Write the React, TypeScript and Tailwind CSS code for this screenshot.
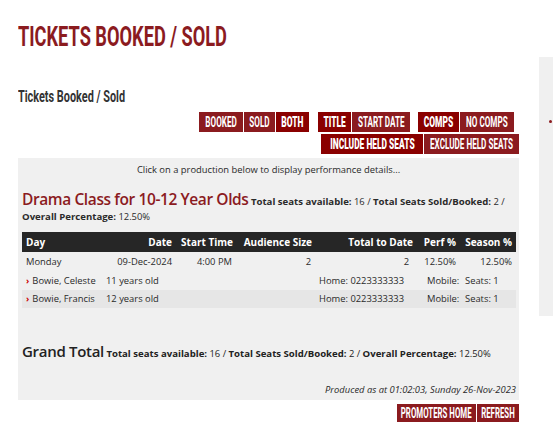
import React from "react";

const RED = "bg-[#8b1b1f]";

function Btn({ label, w, sel }: { label: string; w: string; sel?: boolean }) {
  return (
    <div
      className={`${w} h-[20px] flex items-center justify-center overflow-visible ${
        sel ? "bg-[#8a0000]" : RED
      }`}
    >
      <span
        className={`inline-block whitespace-nowrap text-white text-[14px] leading-[14px] ${
          sel ? "font-black scale-x-[0.6]" : "font-bold scale-x-[0.58]"
        }`}
        style={{ fontFamily: "Roboto, sans-serif" }}
      >
        {label}
      </span>
    </div>
  );
}

function Stats() {
  return (
    <>
      <b className="text-[9.6px]">Total seats available:</b> 16 /{" "}
      <b className="text-[9.6px]">Total Seats Sold/Booked:</b> 2 /{" "}
      <b className="text-[9.6px]">Overall Percentage:</b> 12.50%
    </>
  );
}

export default function App() {
  const cond = { fontFamily: "Roboto, sans-serif" };
  return (
    <div
      className="w-[553px] h-[440px] overflow-hidden bg-white flex text-[#2a2a2a]"
      style={{ fontFamily: '"Open Sans", sans-serif' }}
    >
      <div className="ml-[18px] w-[501px] shrink-0 flex flex-col">
        <div className="pt-[20px] h-[53px]">
          <h1
            className="inline-block origin-left scale-x-[0.65] text-[28px] leading-[34px] font-bold text-[#8b1b1f] whitespace-nowrap"
            style={cond}
          >
            TICKETS BOOKED / SOLD
          </h1>
        </div>
        <div className="mt-[31px] h-[20px]">
          <h2
            className="inline-block origin-left scale-x-[0.64] text-[17px] leading-[20px] font-bold text-[#333] whitespace-nowrap"
            style={cond}
          >
            Tickets Booked / Sold
          </h2>
        </div>
        <div className="mt-[8px] flex justify-end pr-[5px]">
          <div className="flex gap-[1px]">
            <Btn label="BOOKED" w="w-[44px]" />
            <Btn label="SOLD" w="w-[31px]" />
            <Btn label="BOTH" w="w-[33px]" sel />
          </div>
          <div className="flex gap-[1px] ml-[9px]">
            <Btn label="TITLE" w="w-[33px]" sel />
            <Btn label="START DATE" w="w-[58px]" />
          </div>
          <div className="flex gap-[1px] ml-[8px]">
            <Btn label="COMPS" w="w-[41px]" sel />
            <Btn label="NO COMPS" w="w-[54px]" />
          </div>
        </div>
        <div className="mt-[2px] flex justify-end">
          <div className="flex gap-[1px]">
            <Btn label="INCLUDE HELD SEATS" w="w-[102px]" sel />
            <Btn label="EXCLUDE HELD SEATS" w="w-[95px]" />
          </div>
        </div>

        <div className="mt-[4px] bg-[#f0f0f0] pt-[5px] pb-[3px] text-[9.4px]">
          <div className="text-center leading-[14px]">
            Click on a production below to display performance details...
          </div>
          <div className="mt-[11px] px-[4px] leading-[14px]">
            <span className="text-[15.5px] leading-[22px] tracking-[-0.4px] font-semibold text-[#8b1b1f]">
              Drama Class for 10-12 Year Olds
            </span>{" "}
            <Stats />
          </div>

          <div className="mt-[8px] ml-[4px] w-[494px]">
            <div className="flex h-[20px] items-center bg-[#262626] text-white font-bold text-[10px]">
              <div className="w-[78px] pl-[4px]">Day</div>
              <div className="w-[76px] pr-[4px] text-right">Date</div>
              <div className="w-[61px] pr-[4px] text-right">Start Time</div>
              <div className="w-[79px] pr-[4px] text-right">Audience Size</div>
              <div className="w-[101px] pr-[4px] text-right">Total to Date</div>
              <div className="w-[43px] pr-[4px] text-right">Perf %</div>
              <div className="w-[56px] pr-[4px] text-right">Season %</div>
            </div>
            <div className="flex h-[20px] items-center">
              <div className="w-[78px] pl-[4px]">Monday</div>
              <div className="w-[76px] pr-[4px] text-right">09-Dec-2024</div>
              <div className="w-[61px] pr-[5px] text-right">4:00 PM</div>
              <div className="w-[79px] pr-[5px] text-right">2</div>
              <div className="w-[101px] pr-[8px] text-right">2</div>
              <div className="w-[43px] pr-[4px] text-right">12.50%</div>
              <div className="w-[56px] pr-[4px] text-right">12.50%</div>
            </div>
            {[
              { n: "Bowie, Celeste", a: "11 years old", bg: "" },
              { n: "Bowie, Francis", a: "12 years old", bg: "bg-[#e6e6e6]" },
            ].map((p) => (
              <div key={p.n} className={`flex h-[18px] items-center ${p.bg}`}>
                <div className="w-[84px] pl-[4px] flex items-center whitespace-nowrap">
                  <span className="text-[#c00] font-bold text-[9px] mr-[3px]">›</span>
                  {p.n}
                </div>
                <div className="w-[213px]">{p.a}</div>
                <div className="w-[108px] whitespace-nowrap">Home: 0223333333</div>
                <div className="w-[38px]">Mobile:</div>
                <div className="flex-1">Seats: 1</div>
              </div>
            ))}
          </div>

          <div className="mt-[32px] px-[4px] leading-[14px] text-[#222]">
            <span className="text-[15px] leading-[22px] tracking-[-0.3px] font-semibold">
              Grand Total
            </span>{" "}
            <Stats />
          </div>
          <div className="mt-[21px] pr-[3px] text-right italic leading-[14px]">
            Produced as at 01:02:03, Sunday 26-Nov-2023
          </div>
        </div>

        <div className="mt-[4px] flex justify-end gap-[1px]">
          <div className="w-[79px] h-[18px] bg-[#8b1b1f] flex items-center justify-center">
            <span
              className="inline-block whitespace-nowrap text-white text-[14px] leading-[14px] font-bold scale-x-[0.56]"
              style={cond}
            >
              PROMOTERS HOME
            </span>
          </div>
          <div className="w-[42px] h-[18px] bg-[#8b1b1f] flex items-center justify-center">
            <span
              className="inline-block whitespace-nowrap text-white text-[14px] leading-[14px] font-bold scale-x-[0.56]"
              style={cond}
            >
              REFRESH
            </span>
          </div>
        </div>
      </div>

      <div className="ml-[20px] mt-[57px] w-[200px] h-[259px] shrink-0 bg-[#f0f0f0]">
        <div className="ml-[10px] mt-[63px] w-[3px] h-[3px] rounded-full bg-[#8b1b1f]" />
      </div>
    </div>
  );
}
